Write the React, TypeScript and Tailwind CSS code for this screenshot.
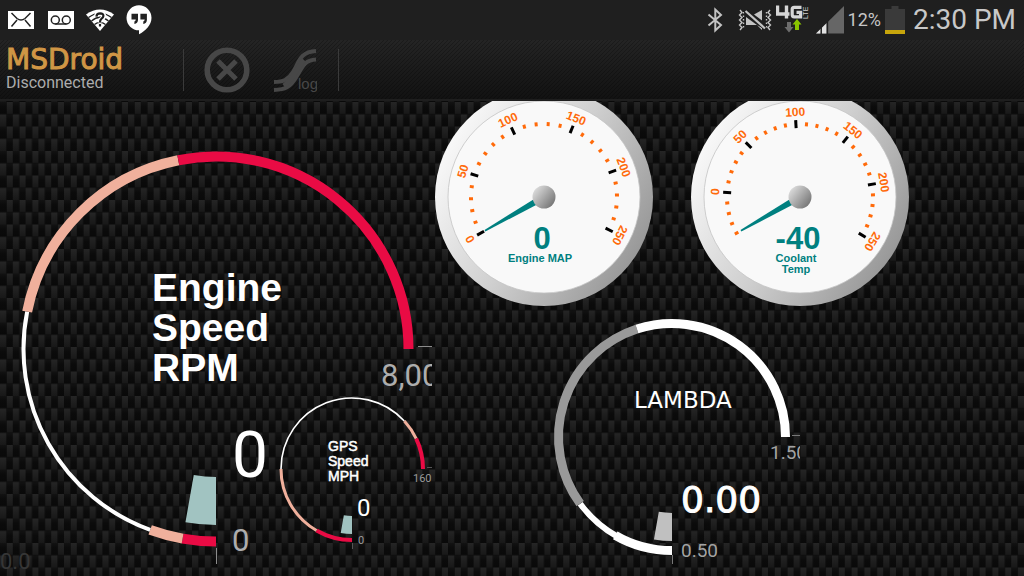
import type { ReactNode } from "react";

type Segment = { from: number; to: number; color: string; width: number };

// Angles are in degrees, clockwise, starting straight down
function point(angle: number, radius: number) {
  const rad = (angle * Math.PI) / 180;
  return { x: -radius * Math.sin(rad), y: radius * Math.cos(rad) };
}

function arcPath(from: number, to: number, radius: number) {
  const a = point(from, radius);
  const b = point(to, radius);
  const large = to - from > 180 ? 1 : 0;
  return `M${a.x} ${a.y} A${radius} ${radius} 0 ${large} 1 ${b.x} ${b.y}`;
}

const rpmSegments: Segment[] = [
  { from: 0, to: 10, color: "#e90b44", width: 10 },
  { from: 10, to: 20, color: "#f0b09c", width: 10 },
  { from: 20, to: 101.2, color: "#ffffff", width: 4 },
  { from: 101.2, to: 168.7, color: "#f0b09c", width: 10 },
  { from: 168.7, to: 270, color: "#e90b44", width: 10 },
];

const speedSegments: Segment[] = [
  { from: 0, to: 30, color: "#e90b44", width: 4 },
  { from: 30, to: 90, color: "#f0b09c", width: 3 },
  { from: 90, to: 227.5, color: "#ffffff", width: 1.6 },
  { from: 227.5, to: 244.7, color: "#f0b09c", width: 3 },
  { from: 244.7, to: 270, color: "#e90b44", width: 4 },
];

const lambdaSegments: Segment[] = [
  { from: 0, to: 30, color: "#ffffff", width: 9 },
  { from: 29, to: 54, color: "#ffffff", width: 6 },
  { from: 54, to: 162, color: "#999999", width: 9 },
  { from: 162, to: 270, color: "#ffffff", width: 9 },
];

function CarbonFiber() {
  return (
    <svg className="absolute inset-0 h-full w-full" aria-hidden="true">
      <defs>
        <linearGradient id="brick" x1="0" y1="0" x2="0" y2="1">
          <stop offset="0" stopColor="#252525" />
          <stop offset="1" stopColor="#181818" />
        </linearGradient>
        <linearGradient id="gap" x1="0" y1="0" x2="0" y2="1">
          <stop offset="0" stopColor="#121212" />
          <stop offset="0.4" stopColor="#0b0b0b" />
          <stop offset="1" stopColor="#090909" />
        </linearGradient>
        <pattern
          id="carbon"
          width="12.8"
          height="24.5"
          patternUnits="userSpaceOnUse"
          patternTransform="translate(0 1)"
        >
          <rect x="6.4" y="0" width="6.4" height="12.25" fill="url(#brick)" />
          <rect x="6.4" y="12.25" width="6.4" height="12.25" fill="url(#gap)" />
          <rect x="0" y="0" width="6.4" height="12.25" fill="url(#gap)" />
          <rect x="0" y="12.25" width="6.4" height="12.25" fill="url(#brick)" />
        </pattern>
      </defs>
      <rect width="100%" height="100%" fill="url(#carbon)" />
    </svg>
  );
}

function RingSegments({ segments, radius }: { segments: Segment[]; radius: number }) {
  return (
    <g fill="none">
      {segments.map((s) => (
        <path
          key={s.from}
          d={arcPath(s.from, s.to, radius)}
          stroke={s.color}
          strokeWidth={s.width}
        />
      ))}
    </g>
  );
}

function RingNeedle({ inner, outer, color }: { inner: number; outer: number; color: string }) {
  const a = point(10, inner);
  const b = point(10, outer);
  return (
    <path
      d={`M0 ${inner} A${inner} ${inner} 0 0 1 ${a.x} ${a.y} L${b.x} ${b.y} A${outer} ${outer} 0 0 0 0 ${outer} Z`}
      fill={color}
    />
  );
}

function RpmGauge() {
  return (
    <svg
      width="432"
      height="475"
      viewBox="-216 -248 432 475"
      role="img"
      aria-label="Engine Speed RPM"
      className="block shrink-0"
    >
      <RingSegments segments={rpmSegments} radius={192.5} />
      <RingNeedle inner={128} outer={176} color="#a1c3c1" />
      <path d="M0.5 199V215M202 -2.5H216" stroke="#8c8c8c" />
      <g className="font-['Liberation_Sans',sans-serif] text-[39px] font-bold" fill="#fff">
        <text x="-64" y="-48">Engine</text>
        <text x="-64" y="-8">Speed</text>
        <text x="-64" y="32">RPM</text>
      </g>
      <g className="font-[Roboto,sans-serif]">
        <text x="16" y="128" className="text-[64px]" fill="#fff">0</text>
        <g className="text-[31px]" fill="#adadad">
          <text x="16" y="202">0</text>
          <text x="165" y="37">8,000</text>
        </g>
      </g>
    </svg>
  );
}

function SpeedGauge() {
  return (
    <svg
      width="160"
      height="160"
      viewBox="-80 -80 160 160"
      role="img"
      aria-label="GPS Speed MPH"
      className="block"
    >
      <RingSegments segments={speedSegments} radius={71} />
      <RingNeedle inner={47} outer={65} color="#a1c3c1" />
      <path d="M0.5 74V80M75 -1.5H80" stroke="#555" />
      <g
        className="font-['Liberation_Sans',sans-serif] text-[14px]"
        fill="#fff"
        stroke="#fff"
        strokeWidth="0.5"
      >
        <text x="-24" y="-18">GPS</text>
        <text x="-24" y="-3">Speed</text>
        <text x="-24" y="12">MPH</text>
      </g>
      <g className="font-[Roboto,sans-serif]">
        <text x="5" y="47" className="text-[24px]" fill="#fff">0</text>
        <g className="text-[11px]" fill="#999">
          <text x="6" y="75">0</text>
          <text x="61" y="13">160</text>
        </g>
      </g>
    </svg>
  );
}

function LambdaGauge() {
  return (
    <svg
      width="256"
      height="256"
      viewBox="-128 -128 256 256"
      role="img"
      aria-label="Lambda"
      className="block"
    >
      <RingSegments segments={lambdaSegments} radius={113.5} />
      <RingNeedle inner={76} outer={104} color="#c0c0c0" />
      <path d="M0.5 118V127M120 -1.5H128" stroke="#777" />
      <g className="font-['DejaVu_Sans',sans-serif]" fill="#fff">
        <text x="-38" y="-29" className="text-[23px]">LAMBDA</text>
        <text x="9" y="75" className="text-[36px]" stroke="#fff">0.00</text>
      </g>
      <g className="font-[Roboto,sans-serif] text-[19px]" fill="#a3a3a3">
        <text x="9" y="120">0.50</text>
        <text x="98" y="22">1.50</text>
      </g>
    </svg>
  );
}

type DialProps = {
  id: string;
  min: number;
  max: number;
  degreesPerUnit: number;
  value: number;
  label: string[];
};

function DialGauge({ id, min, max, degreesPerUnit, value, label }: DialProps) {
  const start = 60.3;
  const ticks: number[] = [];
  for (let v = min; v <= max; v += 10) ticks.push(v);

  return (
    <svg
      width="256"
      height="208"
      viewBox="-128 -96 256 208"
      role="img"
      aria-label={label.join(" ")}
      className="block shrink-0"
    >
      <defs>
        <linearGradient id={`${id}-rim`} x1="0" y1="0.2" x2="1" y2="0.8">
          <stop offset="0.05" stopColor="#fafafa" />
          <stop offset="0.5" stopColor="#cfcfcf" />
          <stop offset="0.95" stopColor="#969696" />
        </linearGradient>
        <linearGradient id={`${id}-hub`} x1="0" y1="0.1" x2="1" y2="0.9">
          <stop offset="0" stopColor="#e6e6e6" />
          <stop offset="1" stopColor="#6b6b6b" />
        </linearGradient>
      </defs>
      <circle r="109" fill={`url(#${id}-rim)`} />
      <circle r="96" fill="#f9f9f9" stroke="#c4c4c4" strokeWidth="0.8" />

      {ticks.map((v) => {
        const major = v % 50 === 0;
        const angle = start + (v - min) * degreesPerUnit;
        return (
          <g key={v} transform={`rotate(${angle - 180})`}>
            {major ? (
              <>
                <rect x="-1.5" y="-77" width="3" height="8" fill="#000" />
                <text
                  y="-81"
                  textAnchor="middle"
                  className="font-['Liberation_Sans',sans-serif] text-[12px] font-bold"
                  fill="#ff6a0a"
                >
                  {v}
                </text>
              </>
            ) : (
              <rect x="-1.5" y="-75" width="3" height="4" fill="#ff6a0a" />
            )}
          </g>
        );
      })}

      <path
        d="M0 -3.4L-68 -0.9V0.9L0 3.4Z"
        transform={`rotate(${start - 90 + (value - min) * degreesPerUnit})`}
        fill="#008080"
      />
      <circle r="11.5" fill={`url(#${id}-hub)`} />

      <g
        className="font-['Liberation_Sans',sans-serif] font-bold"
        textAnchor="middle"
        fill="#008080"
      >
        <text x="-2" y="52" className="text-[31px]">{value}</text>
        {label.map((line, i) => (
          <text key={line} x="-4" y={65 + i * 11} className="text-[11px]">
            {line}
          </text>
        ))}
      </g>
    </svg>
  );
}

function NotificationIcons() {
  return (
    <div className="flex items-center">
      <svg width="26" height="18" viewBox="0 0 26 18" aria-hidden="true">
        <rect width="26" height="18" fill="#fff" />
        <path
          d="M3.5 2L9 7.5Q13 10.5 17 7.5L22.5 2M3.5 15.5L9 9M22.5 15.5L17 9"
          fill="none"
          stroke="#222"
          strokeWidth="1.5"
        />
      </svg>
      <svg width="26" height="18" viewBox="0 0 26 18" className="ml-3.5" aria-hidden="true">
        <rect width="26" height="18" fill="#fff" />
        <g fill="none" stroke="#222" strokeWidth="1.5">
          <circle cx="7.3" cy="9" r="4" />
          <circle cx="18.3" cy="9" r="4" />
          <path d="M7.3 13H18.3" />
        </g>
      </svg>
      <svg width="28" height="22" viewBox="0 0 28 22" className="ml-3" aria-hidden="true">
        <path d="M0 5.5Q14 -4.5 28 5.5L14 22Z" fill="#fff" />
        <g fill="none" stroke="#1f1f1f" strokeWidth="1.3">
          <path d="M2.5 8.6Q14 -0.5 25.5 8.6M5.5 12Q14 4.5 22.5 12M8.5 15.6Q14 11 19.5 15.6" />
        </g>
        <path
          d="M10.4 7.6Q10.6 3.8 14.2 3.8Q18 3.9 17.8 7Q17.7 8.8 15.6 10Q14 11 14 13.6M14 15.6V18"
          fill="none"
          stroke="#fff"
          strokeWidth="4.6"
        />
        <path
          d="M10.4 7.6Q10.6 4.4 14.2 4.4Q17.6 4.5 17.4 7Q17.3 8.6 15.4 9.8Q14 10.8 14 13.2M14 15V17.4"
          fill="none"
          stroke="#1f1f1f"
          strokeWidth="2.2"
        />
      </svg>
      <svg width="26" height="30" viewBox="0 0 26 30" className="ml-3" aria-hidden="true">
        <path
          d="M13 0.3A12.5 12.5 0 0 1 25.5 12.8C25.5 20 19.5 26 13 29.3V25.3A12.5 12.5 0 0 1 13 0.3Z"
          fill="#fff"
        />
        <path
          d="M5.5 8.7H12V15Q11.8 18.4 8.4 19V16.4Q9.7 16 9.8 14.6H5.5ZM14.4 8.7H20.9V15Q20.7 18.4 17.3 19V16.4Q18.6 16 18.7 14.6H14.4Z"
          fill="#222"
        />
      </svg>
    </div>
  );
}

function SystemIcons() {
  return (
    <div className="flex h-10 items-center">
      <svg width="17" height="26" viewBox="0 0 17 26" aria-hidden="true">
        <path
          d="M1.5 7.5L14 18L8.3 23.5V2.5L14 8L1.5 18.5"
          fill="none"
          stroke="#c3c3c3"
          strokeWidth="2"
        />
      </svg>
      <svg width="34" height="24" viewBox="0 0 34 24" className="ml-3.5" aria-hidden="true">
        <g fill="none" stroke="#c3c3c3" strokeWidth="1.4">
          <path d="M2 2L4 4.5L1.5 7L4 9.5L1.5 12L4 14.5L1.5 17L4 19.5L2 22" />
          <path d="M5.5 4V20" strokeDasharray="1.5 2" />
          <path d="M32 2L30 4.5L32.5 7L30 9.5L32.5 12L30 14.5L32.5 17L30 19.5L32 22" />
          <path d="M28.5 4V20" strokeDasharray="1.5 2" />
        </g>
        <path d="M8 9L19 17H8ZM16 6.5L24 2V12.5ZM19 17L24 20V22Z" fill="#c3c3c3" />
        <path d="M7.5 2.5L27 19.5" stroke="#1f1f1f" strokeWidth="4.5" />
        <path d="M7.5 3L27 20.5" stroke="#c3c3c3" strokeWidth="2.2" />
      </svg>
      <svg width="34" height="30" viewBox="0 0 34 30" className="ml-1" role="img" aria-label="4G LTE">
        <path
          d="M1.5 0.5V9H13.5M10.5 0.5V13.5"
          fill="none"
          stroke="#d6d6d6"
          strokeWidth="3.4"
        />
        <path
          d="M25.5 2.3H18.2Q16.2 2.3 16.2 4.3V9.8Q16.2 11.8 18.2 11.8H24.6V7.4H20.5"
          fill="none"
          stroke="#d6d6d6"
          strokeWidth="3.2"
        />
        <text
          x="-14"
          y="32"
          transform="rotate(-90)"
          className="font-['Liberation_Sans',sans-serif] text-[7px]"
          fill="#d0d0d0"
        >
          LTE
        </text>
        <path d="M11 17H15V22H17.5L13 27.5L8.5 22H11Z" fill="#6d6d6d" />
        <path d="M19 25H23V19.5H25.5L21 14L16.5 19.5H19Z" fill="#8ac400" />
      </svg>
      <svg width="28" height="28" viewBox="0 0 28 28" className="ml-1.5" aria-hidden="true">
        <path d="M0 27.5L28 0V27.5Z" fill="#666" />
        <path d="M0 27.5L10.5 17.2V27.5Z" fill="#e2e2e2" />
        <path d="M5.2 20V28M11.4 12V28" stroke="#1f1f1f" strokeWidth="1.5" />
      </svg>
      <span className="ml-1 font-[Roboto,sans-serif] text-lg text-[#c6c6c6]">12%</span>
      <svg width="20" height="28" viewBox="0 0 20 28" className="ml-1" aria-hidden="true">
        <path d="M0 3H6.5V0H13.5V3H20V24H0Z" fill="#3a3a3a" />
        <rect y="24" width="20" height="4" fill="#c7a50c" />
      </svg>
      <span className="ml-2 font-[Roboto,sans-serif] text-[28px] leading-8 text-[#c8c8c8]">
        2:30 PM
      </span>
    </div>
  );
}

function ToolButton({ label, children }: { label: string; children: ReactNode }) {
  return (
    <button
      type="button"
      aria-label={label}
      className="flex h-12 w-12 items-center justify-center text-[#474747]"
    >
      {children}
    </button>
  );
}

function TitleBar() {
  return (
    <header className="relative flex h-[61px] items-center border-b-2 border-[#1e1e1e] bg-linear-to-b from-[#242424] to-[#121212]">
      <svg className="absolute inset-0 h-full w-full" aria-hidden="true">
        <pattern id="hatch" width="4" height="4" patternUnits="userSpaceOnUse">
          <path d="M-1 1L1 -1M0 4L4 0M3 5L5 3" stroke="#000" strokeOpacity="0.25" />
        </pattern>
        <rect width="100%" height="100%" fill="url(#hatch)" />
      </svg>
      <div className="relative w-[183px] pb-px pl-1.5">
        <h1 className="font-['DejaVu_Sans',sans-serif] text-[28px] leading-7 text-[#d09645] [-webkit-text-stroke:1px_#d09645]">
          MSDroid
        </h1>
        <p className="font-[Roboto,sans-serif] text-base leading-[18px] text-[#acacac]">
          Disconnected
        </p>
      </div>
      <div className="relative flex items-center border-x border-[#3a3a3a]">
        <div className="flex h-[42px] items-center gap-5 px-[19px]">
          <ToolButton label="Disconnect">
            <svg width="46" height="46" viewBox="0 0 46 46">
              <g fill="none" stroke="currentColor">
                <circle cx="23" cy="23" r="19.8" strokeWidth="5.6" />
                <path d="M14 14L32 32M32 14L14 32" strokeWidth="5" />
              </g>
            </svg>
          </ToolButton>
          <ToolButton label="Data log">
            <svg width="44" height="46" viewBox="0 0 44 46">
              <g fill="none" stroke="currentColor" strokeWidth="4">
                <path d="M43 4C26 5 26 16 20 25C15 33 10 35 1 35" />
                <path d="M43 12.5C31 13 29 21 24 29C17 41 12 42.5 1 43" />
                <path d="M31 13C27 17 25 21 22 26C19 31 16 35 11 39" strokeWidth="5" />
              </g>
              <text
                x="25"
                y="42"
                className="font-['Liberation_Sans',sans-serif] text-[15px]"
                fill="currentColor"
              >
                log
              </text>
            </svg>
          </ToolButton>
        </div>
      </div>
    </header>
  );
}

export default function App() {
  return (
    <div className="flex min-h-screen flex-col overflow-hidden bg-black">
      <div className="flex h-10 items-center justify-between bg-[#1f1f1f] px-2">
        <NotificationIcons />
        <SystemIcons />
      </div>

      <TitleBar />

      <main className="relative flex-1 overflow-hidden">
        <CarbonFiber />
        <div className="relative flex">
          <section className="relative">
            <RpmGauge />
            {/* GPS speed sits over the corner of the RPM ring */}
            <div className="absolute right-0 bottom-[27px]">
              <SpeedGauge />
            </div>
          </section>

          <section className="-ml-4 flex flex-col items-center">
            <div className="flex">
              <DialGauge
                id="map"
                min={0}
                max={250}
                degreesPerUnit={0.946}
                value={0}
                label={["Engine MAP"]}
              />
              <DialGauge
                id="coolant"
                min={-40}
                max={250}
                degreesPerUnit={0.832}
                value={-40}
                label={["Coolant", "Temp"]}
              />
            </div>
            <LambdaGauge />
          </section>
        </div>
        <span className="absolute bottom-0 left-0 font-[Roboto,sans-serif] text-[22px] leading-7 text-[#363636]">
          0.0
        </span>
      </main>
    </div>
  );
}
